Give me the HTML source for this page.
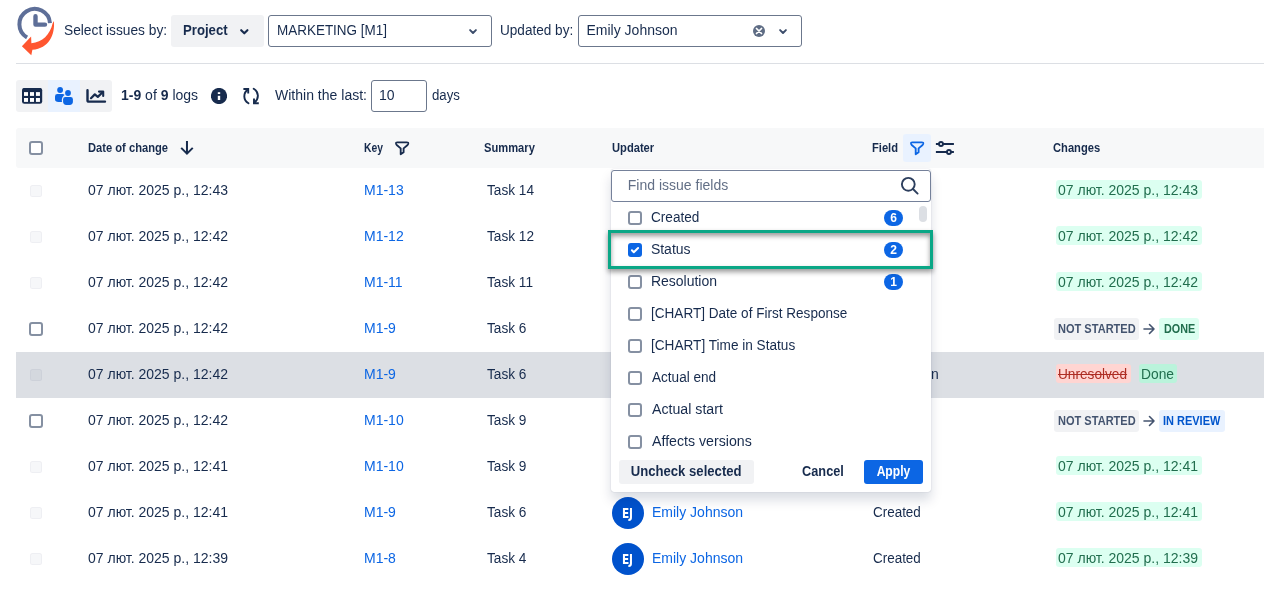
<!DOCTYPE html>
<html lang="en">
<head>
<meta charset="utf-8">
<title>Issue History</title>
<style>
*{box-sizing:border-box;margin:0;padding:0}
html,body{width:1264px;height:591px;overflow:hidden;background:#fff}
body{font-family:"Liberation Sans",sans-serif;font-size:14px;color:#172b4d;position:relative;will-change:transform}
.a{position:absolute;white-space:nowrap}
.t{position:absolute;white-space:nowrap;line-height:20px;height:20px}
.b{font-weight:bold}
.sel{position:absolute;border:1px solid #6b778c;border-radius:3px;background:#fff;height:32px}
.th{font-size:12px;font-weight:bold;color:#172b4d}
.row{position:absolute;left:16px;width:1248px;height:46px}
.lnk{color:#0c66e4}
.cb{position:absolute;width:14px;height:14px;border:2px solid #8590a2;border-radius:3px;background:#fff}
.cbd{position:absolute;width:12px;height:12px;border:1px solid rgba(9,30,90,.035);border-radius:2.5px;background:rgba(9,30,90,.035)}
.dt{position:absolute;width:146px;height:19px;line-height:20px;background:#dcfff1;color:#216e4e;border-radius:3px;padding:0 2px;white-space:nowrap}
.loz{position:absolute;height:22px;line-height:22px;font-size:12px;font-weight:bold;border-radius:3px;padding:0 3px;white-space:nowrap}
.li{position:absolute;left:0;width:320px;height:32px}
.li .cb{left:17px;top:10px}
.li .t{left:39.9px;top:6px}
.li .t.i5,.li .t.i6,.li .t.i7{left:40.9px}
.bdg{position:absolute;left:273px;top:9px;width:19px;height:16px;border-radius:8px;background:#0c66e4;color:#fff;font-size:12px;font-weight:bold;line-height:16px;text-align:center}

.av{position:absolute;width:32px;height:32px;border-radius:50%;background:#0052cc;color:#fff;font-family:"DejaVu Sans Condensed","DejaVu Sans",sans-serif;font-size:13.6px;font-weight:bold;line-height:32.5px;text-align:center}
.av span{display:inline-block;transform:scaleX(.86);margin-left:-1px}
.rs{position:absolute;height:19px;line-height:21px;border-radius:3px;padding:0 2px;white-space:nowrap}
.dd{position:absolute;left:611px;top:169px;width:320px;height:322.5px;background:#fff;border-radius:3px;box-shadow:0 8px 12px rgba(9,30,66,.15),0 0 1px rgba(9,30,66,.31)}
.cb.ck{background:#0c66e4;border-color:#0c66e4}
.btn{position:absolute;height:24px;line-height:22px;border-radius:3px;font-weight:bold;text-align:center;white-space:nowrap}

.t,.btn span,.loz span,.rs span,.dt span{transform-origin:0 50%;display:inline-block}
.btn span{transform-origin:50% 50%}
.th{transform:scaleX(.93);margin-left:.2px}
.th.thk{transform:scaleX(.86)}
.x-sel{transform:scaleX(.982)}
.x-prj{transform:scaleX(.94)}
.x-mkt{transform:scaleX(.962)}
.x-upd{transform:scaleX(.97)}
.x-day{transform:scaleX(.945)}
.x-wit{transform:scaleX(1.002)}
.sm{transform:scaleX(.975)}
.fd{transform:scaleX(.96)}
.fr{transform:scaleX(.995)}
.loz span.ns{transform:scaleX(.92);margin-left:.6px}
.loz span.dn{transform:scaleX(.90);margin-left:1.5px}
.loz span.ir{transform:scaleX(.915);margin-left:1.4px}
.rs span.ur{transform:scaleX(.975)}
.rs span.dn2{transform:scaleX(.985);margin-left:-.5px}
.i0{transform:scaleX(.97)}
.i3{transform:scaleX(.968)}
.i4{transform:scaleX(.972)}
.i5{transform:scaleX(.97)}
.i6{transform:scaleX(1.012)}
.i7{transform:scaleX(1.012)}
.us{transform:scaleX(.937)}
.cn{transform:scaleX(.909)}
.ap{transform:scaleX(.865)}
</style>
</head>
<body>

<!-- logo -->
<svg class="a" style="left:14px;top:4px" width="44" height="54" viewBox="0 0 44 54">
  <path d="M13.05 33.45 A15.3 15.3 0 1 1 35.96 19.13" fill="none" stroke="#5e6f98" stroke-width="4" stroke-linecap="butt"/>
  <path d="M21.5 12.3 V20.6 H31" fill="none" stroke="#5e6f98" stroke-width="4.4" stroke-linecap="round" stroke-linejoin="round"/>
  <path d="M39.9 17 C41.2 30.5 35 44.6 18.4 45.8 L17.3 51.2 L7.9 42.3 L17.1 32.6 L17.4 39.2 C28.5 38.3 36 30.5 38.6 19.5 Z" fill="#ff5630"/>
</svg>

<!-- top filter bar -->
<span class="t x-sel" style="left:64px;top:20px">Select issues by:</span>
<div class="a" style="left:171px;top:15px;width:93px;height:32px;background:#f1f2f4;border-radius:3px"></div>
<span class="t b x-prj" style="left:183px;top:20px">Project</span>
<svg class="a" style="left:239.5px;top:28.5px" width="10" height="8" viewBox="0 0 10 8"><path d="M1.2 1.2 L4.3 4.3 L7.4 1.2" fill="none" stroke="#172b4d" stroke-width="2.1" stroke-linecap="round" stroke-linejoin="round"/></svg>

<div class="sel" style="left:268px;top:15px;width:224px"></div>
<span class="t x-mkt" style="left:276.7px;top:20px">MARKETING [M1]</span>
<svg class="a" style="left:469px;top:28.8px" width="10" height="8" viewBox="0 0 10 8"><path d="M1.1 1.1 L4 4 L6.9 1.1" fill="none" stroke="#3c4d6b" stroke-width="1.9" stroke-linecap="round" stroke-linejoin="round"/></svg>

<span class="t x-upd" style="left:499.8px;top:20px">Updated by:</span>
<div class="sel" style="left:578px;top:15px;width:224px"></div>
<span class="t" style="left:586.5px;top:20px">Emily Johnson</span>
<svg class="a" style="left:752px;top:24px" width="14" height="14" viewBox="0 0 14 14"><circle cx="7" cy="7" r="6" fill="#5e6c84"/><path d="M4.5 4.5 L9.5 9.5 M9.5 4.5 L4.5 9.5" stroke="#fff" stroke-width="1.75" stroke-linecap="round"/></svg>
<svg class="a" style="left:779px;top:28.8px" width="10" height="8" viewBox="0 0 10 8"><path d="M1.1 1.1 L4 4 L6.9 1.1" fill="none" stroke="#3c4d6b" stroke-width="1.9" stroke-linecap="round" stroke-linejoin="round"/></svg>

<div class="a" style="left:16px;top:63px;width:1248px;height:1px;background:#dcdfe4"></div>

<!-- toolbar -->
<div class="a" style="left:16px;top:80px;width:96px;height:32px;background:#f1f2f4;border-radius:3px"></div>
<div class="a" style="left:48px;top:80px;width:32px;height:32px;background:#e9f2ff"></div>
<!-- table icon -->
<svg class="a" style="left:22px;top:88px" width="21" height="16" viewBox="0 0 21 16"><rect x="0" y="-0.1" width="20.2" height="15.9" rx="2.4" fill="#172b4d"/><g fill="#fff"><rect x="2" y="4.1" width="4" height="3.8"/><rect x="8" y="4.1" width="4" height="3.8"/><rect x="13.95" y="4.1" width="4" height="3.8"/><rect x="2" y="10" width="4" height="3.9"/><rect x="8" y="10" width="4" height="3.9"/><rect x="13.95" y="10" width="4" height="3.9"/></g></svg>
<!-- people icon -->
<svg class="a" style="left:54px;top:86px" width="20" height="20" viewBox="0 0 20 20"><g fill="#0c66e4"><circle cx="6.1" cy="4" r="2.9"/><path d="M1 10.4 Q1 8.1 3.4 8.1 H8.6 Q9.8 8.1 10.6 8.9 Q7.8 10.6 7.8 14.4 Q7.8 15.4 8.2 15.9 H4.5 Q1 15.9 1 13.2 Z"/><circle cx="14" cy="7" r="2.9"/><path d="M9.1 13.2 Q9.1 11 11.4 11 H16.6 Q18.9 11 18.9 13.2 V15.8 Q18.9 18.9 15.6 18.9 H12.4 Q9.1 18.9 9.1 15.8 Z"/></g></svg>
<!-- chart icon -->
<svg class="a" style="left:85px;top:88px" width="22" height="16" viewBox="0 0 22 16"><path d="M2.5 2.3 V12.2 Q2.5 13.6 3.9 13.6 H20" fill="none" stroke="#172b4d" stroke-width="2.4" stroke-linecap="round" stroke-linejoin="round"/><path d="M6 10.2 L9.8 6.4 L12.8 8.9 L17.6 4.2" fill="none" stroke="#172b4d" stroke-width="2.2" stroke-linecap="round" stroke-linejoin="round"/><path d="M14 3.6 H18.2 V7.9" fill="none" stroke="#172b4d" stroke-width="2.1" stroke-linecap="round" stroke-linejoin="round"/></svg>

<span class="t" style="left:121px;top:85px"><b>1-9</b> of <b>9</b> logs</span>
<!-- info -->
<svg class="a" style="left:211px;top:88px" width="16" height="16" viewBox="0 0 16 16"><circle cx="8" cy="8" r="8.1" fill="#172b4d"/><rect x="6.8" y="4.2" width="2.4" height="1.8" fill="#fff"/><rect x="6.8" y="7.8" width="2.4" height="4.2" fill="#fff"/></svg>
<!-- refresh -->
<svg class="a" style="left:242px;top:87px" width="18" height="18" viewBox="0 0 18 18"><g fill="none" stroke="#172b4d" stroke-width="1.9" stroke-linejoin="miter"><path d="M6.5 16.3 C1 13 1 6 6 2.2" stroke-linecap="round"/><path d="M1.4 2 H6.2 V6.6"/><path d="M11.7 1.7 C17.2 5 17.2 12 12.1 16" stroke-linecap="round"/><path d="M16.8 16.3 H12 V11.6"/></g></svg>

<span class="t x-wit" style="left:275.2px;top:85px">Within the last:</span>
<div class="sel" style="left:371px;top:80px;width:56px"></div>
<span class="t" style="left:379px;top:85px">10</span>
<span class="t x-day" style="left:432px;top:85px">days</span>

<!-- table header -->
<div class="a" style="left:16px;top:128px;width:1248px;height:40px;background:#f7f8f9;border-radius:3px 0 0 3px"></div>
<div class="cb" style="left:29px;top:141px"></div>
<span class="t th" style="left:88px;top:138px">Date of change</span>
<svg class="a" style="left:180px;top:140px" width="14" height="16" viewBox="0 0 14 16"><path d="M6.97 0.9 V13.5 M1.2 7.9 L6.97 13.7 L12.75 7.9" fill="none" stroke="#172b4d" stroke-width="2" stroke-linecap="butt" stroke-linejoin="miter"/></svg>
<span class="t th thk" style="left:364.3px;top:138px">Key</span>
<svg class="a" style="left:395px;top:141px" width="15" height="15" viewBox="0 0 15 15"><path d="M2.4 1.3 H11.8 Q13.5 1.3 13.2 2.9 Q13 3.7 12.3 4.3 L8.6 7.4 V11.3 L5.7 13.3 V7.4 L2 4.3 Q1.3 3.7 1.1 2.9 Q0.8 1.3 2.4 1.3 Z" fill="none" stroke="#172b4d" stroke-width="1.85" stroke-linejoin="round"/></svg>
<span class="t th" style="left:484px;top:138px">Summary</span>
<span class="t th" style="left:612px;top:138px">Updater</span>
<span class="t th" style="left:872px;top:138px">Field</span>
<div class="a" style="left:903px;top:134px;width:28px;height:28px;background:#e9f2ff;border-radius:3px"></div>
<svg class="a" style="left:910px;top:141px" width="15" height="15" viewBox="0 0 15 15"><path d="M2.4 1.3 H11.8 Q13.5 1.3 13.2 2.9 Q13 3.7 12.3 4.3 L8.6 7.4 V11.3 L5.7 13.3 V7.4 L2 4.3 Q1.3 3.7 1.1 2.9 Q0.8 1.3 2.4 1.3 Z" fill="none" stroke="#0c66e4" stroke-width="1.85" stroke-linejoin="round"/></svg>
<svg class="a" style="left:935px;top:139px" width="20" height="18" viewBox="0 0 20 18"><g stroke="#172b4d" stroke-width="1.9"><path d="M0.9 4.95 H18.9 M0.9 13 H18.9" fill="none"/><circle cx="6" cy="4.95" r="2" fill="#f7f8f9"/><circle cx="13.95" cy="13" r="2" fill="#f7f8f9"/></g></svg>
<span class="t th" style="left:1053px;top:138px">Changes</span>

<!-- ROWS -->
<div class="cbd" style="left:30px;top:185px"></div>
<span class="t dc" style="left:88px;top:180px">07 лют. 2025 р., 12:43</span>
<span class="t lnk ky" style="left:364px;top:180px">M1-13</span>
<span class="t sm" style="left:487px;top:180px">Task 14</span>
<div class="av" style="left:612px;top:175px"><span>EJ</span></div>
<span class="t lnk un" style="left:652px;top:180px">Emily Johnson</span>
<span class="t fd" style="left:872.5px;top:180px">Created</span>
<div class="dt" style="left:1056px;top:180px"><span>07 лют. 2025 р., 12:43</span></div>
<div class="cbd" style="left:30px;top:231px"></div>
<span class="t dc" style="left:88px;top:226px">07 лют. 2025 р., 12:42</span>
<span class="t lnk ky" style="left:364px;top:226px">M1-12</span>
<span class="t sm" style="left:487px;top:226px">Task 12</span>
<div class="av" style="left:612px;top:221px"><span>EJ</span></div>
<span class="t lnk un" style="left:652px;top:226px">Emily Johnson</span>
<span class="t fd" style="left:872.5px;top:226px">Created</span>
<div class="dt" style="left:1056px;top:226px"><span>07 лют. 2025 р., 12:42</span></div>
<div class="cbd" style="left:30px;top:277px"></div>
<span class="t dc" style="left:88px;top:272px">07 лют. 2025 р., 12:42</span>
<span class="t lnk ky" style="left:364px;top:272px">M1-11</span>
<span class="t sm" style="left:487px;top:272px">Task 11</span>
<div class="av" style="left:612px;top:267px"><span>EJ</span></div>
<span class="t lnk un" style="left:652px;top:272px">Emily Johnson</span>
<span class="t fd" style="left:872.5px;top:272px">Created</span>
<div class="dt" style="left:1056px;top:272px"><span>07 лют. 2025 р., 12:42</span></div>
<div class="cb" style="left:29px;top:322px"></div>
<span class="t dc" style="left:88px;top:318px">07 лют. 2025 р., 12:42</span>
<span class="t lnk ky" style="left:364px;top:318px">M1-9</span>
<span class="t sm" style="left:487px;top:318px">Task 6</span>
<div class="av" style="left:612px;top:313px"><span>EJ</span></div>
<span class="t lnk un" style="left:652px;top:318px">Emily Johnson</span>
<span class="t fd" style="left:872.5px;top:318px">Status</span>
<div class="loz" style="left:1054px;top:318px;width:85px;background:#f1f2f4;color:#44546f"><span class="ns">NOT STARTED</span></div>
<svg class="a" style="left:1142px;top:322px" width="14" height="14" viewBox="0 0 14 14"><path d="M2 7 H12 M7.5 2.5 L12 7 L7.5 11.5" fill="none" stroke="#44546f" stroke-width="1.6" stroke-linecap="round" stroke-linejoin="round"/></svg>
<div class="loz" style="left:1159px;top:318px;width:40px;background:#dcfff1;color:#216e4e"><span class="dn">DONE</span></div>
<div class="a" style="left:16px;top:352px;width:1248px;height:46px;background:#dcdfe4"></div>
<div class="cbd" style="left:30px;top:369px"></div>
<span class="t dc" style="left:88px;top:364px">07 лют. 2025 р., 12:42</span>
<span class="t lnk ky" style="left:364px;top:364px">M1-9</span>
<span class="t sm" style="left:487px;top:364px">Task 6</span>
<div class="av" style="left:612px;top:359px"><span>EJ</span></div>
<span class="t lnk un" style="left:652px;top:364px">Emily Johnson</span>
<span class="t fd fr" style="left:872.5px;top:364px">Resolution</span>
<div class="rs" style="left:1056px;top:364px;width:75px;background:#ffd5d2;color:#ae2e24"><span class="ur" style="text-decoration:line-through">Unresolved</span></div>
<div class="rs" style="left:1139px;top:364px;width:38px;background:#baf3db;color:#216e4e"><span class="dn2">Done</span></div>
<div class="cb" style="left:29px;top:414px"></div>
<span class="t dc" style="left:88px;top:410px">07 лют. 2025 р., 12:42</span>
<span class="t lnk ky" style="left:364px;top:410px">M1-10</span>
<span class="t sm" style="left:487px;top:410px">Task 9</span>
<div class="av" style="left:612px;top:405px"><span>EJ</span></div>
<span class="t lnk un" style="left:652px;top:410px">Emily Johnson</span>
<span class="t fd" style="left:872.5px;top:410px">Status</span>
<div class="loz" style="left:1054px;top:410px;width:85px;background:#f1f2f4;color:#44546f"><span class="ns">NOT STARTED</span></div>
<svg class="a" style="left:1142px;top:414px" width="14" height="14" viewBox="0 0 14 14"><path d="M2 7 H12 M7.5 2.5 L12 7 L7.5 11.5" fill="none" stroke="#44546f" stroke-width="1.6" stroke-linecap="round" stroke-linejoin="round"/></svg>
<div class="loz" style="left:1159px;top:410px;width:66px;background:#e9f2ff;color:#0055cc"><span class="ir">IN REVIEW</span></div>
<div class="cbd" style="left:30px;top:461px"></div>
<span class="t dc" style="left:88px;top:456px">07 лют. 2025 р., 12:41</span>
<span class="t lnk ky" style="left:364px;top:456px">M1-10</span>
<span class="t sm" style="left:487px;top:456px">Task 9</span>
<div class="av" style="left:612px;top:451px"><span>EJ</span></div>
<span class="t lnk un" style="left:652px;top:456px">Emily Johnson</span>
<span class="t fd" style="left:872.5px;top:456px">Created</span>
<div class="dt" style="left:1056px;top:456px"><span>07 лют. 2025 р., 12:41</span></div>
<div class="cbd" style="left:30px;top:507px"></div>
<span class="t dc" style="left:88px;top:502px">07 лют. 2025 р., 12:41</span>
<span class="t lnk ky" style="left:364px;top:502px">M1-9</span>
<span class="t sm" style="left:487px;top:502px">Task 6</span>
<div class="av" style="left:612px;top:497px"><span>EJ</span></div>
<span class="t lnk un" style="left:652px;top:502px">Emily Johnson</span>
<span class="t fd" style="left:872.5px;top:502px">Created</span>
<div class="dt" style="left:1056px;top:502px"><span>07 лют. 2025 р., 12:41</span></div>
<div class="cbd" style="left:30px;top:553px"></div>
<span class="t dc" style="left:88px;top:548px">07 лют. 2025 р., 12:39</span>
<span class="t lnk ky" style="left:364px;top:548px">M1-8</span>
<span class="t sm" style="left:487px;top:548px">Task 4</span>
<div class="av" style="left:612px;top:543px"><span>EJ</span></div>
<span class="t lnk un" style="left:652px;top:548px">Emily Johnson</span>
<span class="t fd" style="left:872.5px;top:548px">Created</span>
<div class="dt" style="left:1056px;top:548px"><span>07 лют. 2025 р., 12:39</span></div>

<!-- field filter dropdown -->
<div class="dd">
  <div class="sel" style="left:0;top:1px;width:320px;height:32px;border-color:#75819a"></div>
  <span class="t ph" style="left:16.8px;top:6px;color:#626f86">Find issue fields</span>
  <svg class="a" style="left:288px;top:6px" width="22" height="22" viewBox="0 0 22 22"><circle cx="9.3" cy="9.3" r="6.4" fill="none" stroke="#2c3e5d" stroke-width="1.9"/><path d="M14 14 L18.6 18.6" stroke="#2c3e5d" stroke-width="1.9" stroke-linecap="round"/></svg>
  <div class="a" style="left:308px;top:37px;width:8px;height:16px;border-radius:4px;background:#dcdfe4"></div>
<div class="li" style="top:32px">
<div class="cb"></div>
<span class="t i0">Created</span>
<span class="bdg">6</span>
</div>
<div class="li" style="top:64px">
<div class="cb ck"><svg width="14" height="14" viewBox="0 0 14 14" style="position:absolute;left:-2px;top:-2px"><path d="M3.9 7.3 L5.8 9.2 L10.1 5" fill="none" stroke="#fff" stroke-width="2" stroke-linecap="round" stroke-linejoin="round"/></svg></div>
<span class="t i1">Status</span>
<span class="bdg">2</span>
</div>
<div class="li" style="top:96px">
<div class="cb"></div>
<span class="t i2">Resolution</span>
<span class="bdg">1</span>
</div>
<div class="li" style="top:128px">
<div class="cb"></div>
<span class="t i3">[CHART] Date of First Response</span>
</div>
<div class="li" style="top:160px">
<div class="cb"></div>
<span class="t i4">[CHART] Time in Status</span>
</div>
<div class="li" style="top:192px">
<div class="cb"></div>
<span class="t i5">Actual end</span>
</div>
<div class="li" style="top:224px">
<div class="cb"></div>
<span class="t i6">Actual start</span>
</div>
<div class="li" style="top:256px">
<div class="cb"></div>
<span class="t i7">Affects versions</span>
</div>
  <div class="a" style="left:-3px;top:61px;width:325px;height:39px;border:3px solid #0aa786;box-shadow:0 3px 5px rgba(0,0,0,.4),inset 0 3px 5px rgba(0,0,0,.4)"></div>
  <div class="btn" style="left:8px;top:291px;width:135px;background:#f1f2f4;color:#172b4d"><span class="us">Uncheck selected</span></div>
  <div class="btn" style="left:182px;top:291px;width:60px;color:#172b4d"><span class="cn">Cancel</span></div>
  <div class="btn" style="left:253px;top:291px;width:59px;background:#0c66e4;color:#fff"><span class="ap">Apply</span></div>
</div>

</body>
</html>
